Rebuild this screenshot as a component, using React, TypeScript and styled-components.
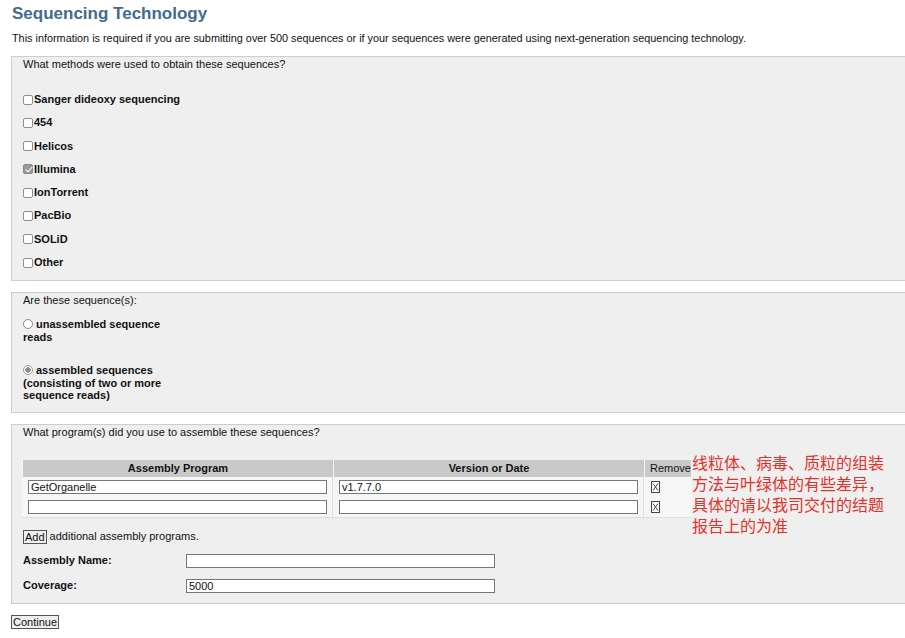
import styled, { createGlobalStyle } from 'styled-components';

const GlobalStyle = createGlobalStyle`
  html, body {
    margin: 0;
    padding: 0;
    background: #fff;
    overflow: hidden;
  }
  body {
    font-family: "Liberation Sans", Arial, sans-serif;
    font-size: 11px;
    color: #111;
  }
`;

const Page = styled.div`
  position: relative;
  width: 905px;
  height: 638px;
  padding: 4px 0 0 11px;
  box-sizing: border-box;
`;

const Title = styled.h1`
  margin: 0 0 0 1px;
  font-size: 17px;
  line-height: 20px;
  font-weight: bold;
  color: #426b8e;
`;

const Intro = styled.p`
  margin: 8px 0 0 1px;
  font-size: 10.85px;
  line-height: 13px;
`;

const Panel = styled.fieldset<{ $top: number; $bottom: number }>`
  margin: ${(p) => p.$top}px 0 0 0;
  width: 910px;
  box-sizing: border-box;
  border: 1px solid #cdcdcd;
  background: #efefef;
  padding: 1px 11px ${(p) => p.$bottom}px 11px;
  min-inline-size: 0;
`;

const Question = styled.div<{ $gap: number }>`
  line-height: 13px;
  margin-bottom: ${(p) => p.$gap}px;
`;

const CheckList = styled.div`
  display: flex;
  flex-direction: column;
  gap: 10.3px;
`;

const CheckRow = styled.label`
  display: flex;
  align-items: center;
  font-weight: bold;
  line-height: 13px;
`;

const Check = styled.input.attrs({ type: 'checkbox' })`
  appearance: none;
  margin: 0 1px 0 0;
  width: 10px;
  height: 10px;
  border: 1px solid #8f8f8f;
  border-radius: 2px;
  background: #fff;
  box-sizing: border-box;
  position: relative;
  &:checked {
    background: #9a9a9a;
    border-color: #8a8a8a;
  }
  &:checked::after {
    content: '';
    position: absolute;
    left: 2.5px;
    top: 0px;
    width: 3px;
    height: 6px;
    border: solid #fff;
    border-width: 0 1.5px 1.5px 0;
    transform: rotate(40deg);
  }
`;

const RadioGroup = styled.div`
  display: flex;
  flex-direction: column;
  gap: 21px;
`;

const RadioRow = styled.label`
  display: block;
  width: 140px;
  font-weight: bold;
  line-height: 12.5px;
`;

const Radio = styled.input.attrs({ type: 'radio' })`
  appearance: none;
  margin: 0 3px 0 0;
  width: 10px;
  height: 10px;
  border: 1px solid #8a8a8a;
  border-radius: 50%;
  background: #fff;
  box-sizing: border-box;
  vertical-align: -1px;
  position: relative;
  &:checked {
    border-color: #9a9a9a;
    background: radial-gradient(circle, #8c8c8c 0 2.5px, #fff 3px);
  }
`;

const ProgramTable = styled.table`
  border-collapse: separate;
  border-spacing: 1px 0;
  background: #f6f6f6;
  margin-left: -1px;
  width: 670px;
  border-bottom: 1px solid #dcdcdc;
`;

const HeadCell = styled.th<{ $w: number }>`
  width: ${(p) => p.$w}px;
  background: #c9c9c9;
  font-weight: bold;
  height: 17px;
  padding: 0;
  text-align: center;
  white-space: nowrap;
`;

const RemoveHead = styled(HeadCell)`
  text-align: left;
  font-weight: normal;
  padding-left: 5px;
`;

const Cell = styled.td`
  padding: 3px 5px 3px 5px;
  border-right: 1px solid #dedede;
  &:last-child {
    border-right: none;
  }
`;

const TextBox = styled.input<{ $w: number }>`
  width: ${(p) => p.$w}px;
  height: 14px;
  box-sizing: border-box;
  border: 1px solid #767676;
  background: #fff;
  padding: 0 2px;
  font-family: "Liberation Sans", Arial, sans-serif;
  font-size: 11px;
  color: #111;
  display: block;
`;

const XBox = styled.span`
  display: block;
  width: 9px;
  height: 12px;
  margin-left: 1px;
`;

const AddLine = styled.div`
  display: flex;
  align-items: center;
  gap: 3px;
  margin-top: 12px;
  line-height: 13px;
`;

const SmallButton = styled.button`
  font-family: "Liberation Sans", Arial, sans-serif;
  font-size: 11px;
  line-height: 12px;
  padding: 0 1px;
  border: 1px solid #555;
  background: #efefef;
  color: #111;
  margin: 0;
`;

const FieldGrid = styled.div`
  display: grid;
  grid-template-columns: 163px 309px;
  row-gap: 11px;
  align-items: center;
  margin-top: 10px;
`;

const FieldLabel = styled.div`
  font-weight: bold;
  line-height: 13px;
`;

const Footer = styled.div`
  margin-top: 11px;
`;

const Note = styled.div`
  position: absolute;
  left: 692px;
  top: 452px;
  width: 200px;
  font-family: "Noto Sans CJK SC", sans-serif;
  font-size: 16px;
  line-height: 21px;
  color: #e5312b;
`;

const XIcon = () => (
  <XBox>
    <svg width="9" height="12" viewBox="0 0 9 12">
      <rect x="0.5" y="0.5" width="8" height="11" fill="#fff" stroke="#444" />
      <path d="M2 2.5 L7 9.5 M7 2.5 L2 9.5" stroke="#444" strokeWidth="1" />
    </svg>
  </XBox>
);

const methods = ['Sanger dideoxy sequencing', '454', 'Helicos', 'Illumina', 'IonTorrent', 'PacBio', 'SOLiD', 'Other'];

const programs = [
  { name: 'GetOrganelle', version: 'v1.7.7.0' },
  { name: '', version: '' },
];

const App = () => (
  <Page>
    <GlobalStyle />
    <Title>Sequencing Technology</Title>
    <Intro>
      This information is required if you are submitting over 500 sequences or if your sequences were generated using next-generation sequencing technology.
    </Intro>

    <Panel $top={11} $bottom={11}>
      <Question $gap={22}>What methods were used to obtain these sequences?</Question>
      <CheckList>
        {methods.map((m) => (
          <CheckRow key={m}>
            <Check defaultChecked={m === 'Illumina'} />
            {m}
          </CheckRow>
        ))}
      </CheckList>
    </Panel>

    <Panel $top={11} $bottom={10}>
      <Question $gap={11}>Are these sequence(s):</Question>
      <RadioGroup>
        <RadioRow>
          <Radio name="assembled" />
          unassembled sequence reads
        </RadioRow>
        <RadioRow>
          <Radio name="assembled" defaultChecked />
          assembled sequences (consisting of two or more sequence reads)
        </RadioRow>
      </RadioGroup>
    </Panel>

    <Panel $top={11} $bottom={10}>
      <Question $gap={21}>What program(s) did you use to assemble these sequences?</Question>
      <ProgramTable>
        <thead>
          <tr>
            <HeadCell $w={309}>Assembly Program</HeadCell>
            <HeadCell $w={309}>Version or Date</HeadCell>
            <RemoveHead $w={46}>Remove</RemoveHead>
          </tr>
        </thead>
        <tbody>
          {programs.map((p, i) => (
            <tr key={i}>
              <Cell>
                <TextBox $w={299} defaultValue={p.name} />
              </Cell>
              <Cell>
                <TextBox $w={299} defaultValue={p.version} />
              </Cell>
              <Cell>
                <XIcon />
              </Cell>
            </tr>
          ))}
        </tbody>
      </ProgramTable>
      <AddLine>
        <SmallButton>Add</SmallButton>
        additional assembly programs.
      </AddLine>
      <FieldGrid>
        <FieldLabel>Assembly Name:</FieldLabel>
        <TextBox $w={309} />
        <FieldLabel>Coverage:</FieldLabel>
        <TextBox $w={309} defaultValue="5000" />
      </FieldGrid>
    </Panel>

    <Footer>
      <SmallButton>Continue</SmallButton>
    </Footer>

    <Note>
      线粒体、病毒、质粒的组装方法与叶绿体的有些差异，具体的请以我司交付的结题报告上的为准
    </Note>
  </Page>
);

export default App;
